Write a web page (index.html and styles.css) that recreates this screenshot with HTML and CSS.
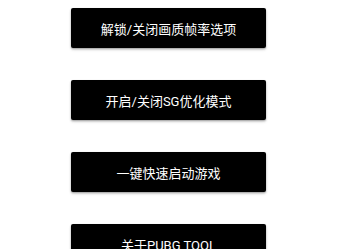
FILE: index.html
```html
<!DOCTYPE html>
<html lang="zh-CN">
<head>
  <meta charset="UTF-8" />
  <meta name="viewport" content="width=device-width, initial-scale=1" />
  <title>PUBG TOOL</title>
  <link rel="stylesheet" href="styles.css">
</head>
<body>
  <div class="menu">
    <button class="btn">解锁/关闭画质帧率选项</button>
    <button class="btn">开启/关闭SG优化模式</button>
    <button class="btn">一键快速启动游戏</button>
    <button class="btn">关于PUBG TOOL</button>
  </div>
</body>
</html>
```

FILE: styles.css
```css
body {
  margin: 0;
  background: #fff;
  font-family: Roboto, "Noto Sans CJK SC", sans-serif;
  overflow: hidden;
}

.menu {
  display: flex;
  flex-direction: column;
  gap: 32px;
  padding-top: 8px;
  padding-left: 71px;
}

.btn {
  width: 195px;
  height: 40px;
  background: #000;
  color: #fff;
  border: none;
  border-radius: 2px;
  box-shadow: 0 1px 2px rgba(0, 0, 0, 0.3), 0 2px 3px rgba(0, 0, 0, 0.12);
  font-family: inherit;
  font-size: 13px;
  padding: 0;
}
```
